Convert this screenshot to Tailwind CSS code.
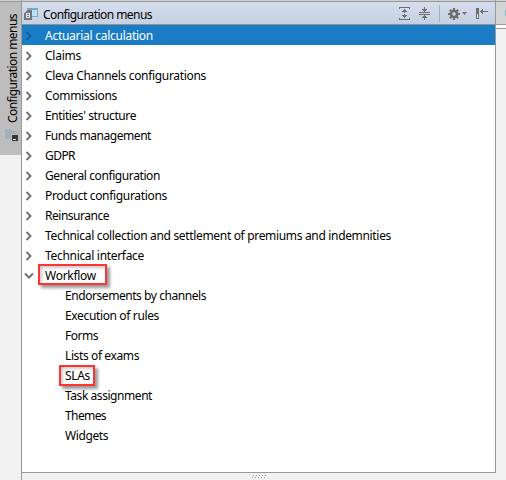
<!DOCTYPE html>
<html lang="en">
<head>
<meta charset="utf-8">
<title>Configuration menus</title>
<script src="https://cdn.jsdelivr.net/npm/@tailwindcss/browser@4"></script>
</head>
<body class="h-[480px] w-[506px] overflow-hidden bg-[#f1f1f1] font-['Noto_Sans',sans-serif] text-[12px] text-black">
<svg class="hidden"><defs>
<symbol id="c" viewBox="0 0 8 10"><path d="M1.5 1 5.5 5l-4 4" fill="none" stroke="currentColor" stroke-width="2"/></symbol>
</defs></svg>
<div class="flex h-full">
  <aside class="w-[21px] shrink-0">
    <div class="h-px bg-[#d0d0d0]"></div>
    <div class="flex h-[154px] flex-col items-center border-t border-[#999] bg-[#bdbdbd] pt-[12px]">
      <div class="flex h-[110px] w-[21px] items-center justify-center pl-[4px]"><span id="tab" class="rotate-180 whitespace-nowrap leading-[16px] [writing-mode:vertical-rl]">Configuration menus</span></div>
      <svg class="mt-[4px] ml-[3px] h-[14px] w-[14px] shrink-0" viewBox="0 0 14 14" shape-rendering="crispEdges"><path d="M0 1h5l2 2h5v8H0z" fill="#a4afb8"/><path d="M6 6h8v8H6z" fill="#bdbdbd"/><path d="M7 7h6v6H7z" fill="#383838"/><path d="M8 11h3v1H8z" fill="#e5e5e5"/></svg>
    </div>
  </aside>
  <main class="flex w-[475px] shrink-0 flex-col border-l border-[#999]">
    <section class="h-[473px] border-r border-b border-[#999] bg-white">
      <div class="h-px bg-[#d0d0d0]"></div>
      <header class="flex h-[24px] items-center border-t border-b border-t-[#999] border-b-[#8e9094] bg-linear-to-b from-[#d5deed] to-[#c7d0e1]">
        <svg class="ml-[2px] mt-[1px] h-[12px] w-[14px]" viewBox="0 0 14 12" shape-rendering="crispEdges"><path d="M3 0h11v9H8V3H3z" fill="#78aaca"/><path d="M8 2h5v6H8z" fill="#bfe0f2"/><path d="M3 2h5v10H0V5z" fill="#727579"/><path d="M2 5h4v5H2z" fill="#dfe5ee"/><path d="M3 6h2v1H3zM3 8h2v1H3z" fill="#727579"/></svg>
        <h1 id="title" class="ml-[5px] mt-[3px] whitespace-nowrap leading-[16px]">Configuration menus</h1>
        <div class="ml-auto flex items-center pt-[1px] text-[#6e6e6e]">
          <svg class="h-[13px] w-[11px]" viewBox="0 0 11 13" fill="currentColor" shape-rendering="crispEdges"><path d="M0 0h11v2h-1V1H1v1H0zM0 11h1v1h9v-1h1v2H0zM5 2h1v1h1v1h1v1H6v1H5V5H3V4h1V3h1zM5 7h1v1h2v1H7v1H6v1H5v-1H4V9H3V8h2z"/></svg>
          <svg class="ml-[9px] h-[13px] w-[11px]" viewBox="0 0 11 13" fill="currentColor" shape-rendering="crispEdges"><path d="M5 0h1v2h2v1H7v1H6v1H5V4H4V3H3V2h2zM0 5h11v1H0zM0 7h11v1H0zM5 8h1v1h1v1h1v1H6v2H5v-2H3v-1h1V9h1z"/></svg>
          <div class="ml-[9px] h-[17px] w-px bg-[#aaaeb6]"></div>
          <svg class="ml-[8px] h-[12px] w-[12px]" viewBox="0 0 12 12"><g stroke="currentColor" stroke-width="2.2"><path d="M6 0v12M0 6h12M1.8 1.8l8.4 8.4M10.2 1.8l-8.4 8.4"/></g><circle cx="6" cy="6" r="4.3" fill="currentColor"/><circle cx="6" cy="6" r="1.8" fill="#ced7e7"/></svg>
          <svg class="ml-[2px] h-[3px] w-[5px]" viewBox="0 0 5 3"><path d="M0 0h5L2.5 3z" fill="currentColor"/></svg>
          <svg class="ml-[9px] mr-[7px] h-[11px] w-[12px]" viewBox="0 0 12 11" fill="currentColor" shape-rendering="crispEdges"><path d="M0 0h3v11H0z"/><path d="M1 6h1v4H1z" fill="#eef1f6"/><path d="M4 3h1V2h1V1h1v2h5v1H7v2H6V5H5V4H4z"/></svg>
        </div>
      </header>
      <ul id="tree"></ul>
    </section>
    <div class="flex h-[7px] justify-center pt-[2px]">
      <svg class="h-[3px] w-[14px]" viewBox="0 0 14 3" fill="#999" shape-rendering="crispEdges"><path d="M1 0h1v1H1zM4 0h1v1H4zM7 0h1v1H7zM10 0h1v1h-1zM13 0h1v1h-1zM0 2h1v1H0zM3 2h1v1H3zM6 2h1v1H6zM9 2h1v1H9zM12 2h1v1h-1z"/></svg>
    </div>
  </main>
  <aside class="flex w-[10px] flex-col">
    <div class="h-px bg-[#d0d0d0]"></div>
    <div class="relative h-[24px] border-t border-b border-[#999] bg-[#d4d4d4]"><div class="absolute top-[8px] right-0 h-[6px] w-px bg-[#72c8d3]"></div></div>
    <div class="h-[4px] border-b border-[#999] bg-white"></div>
  </aside>
</div>
<script>
const rows = [
  ['Actuarial calculation', 108], ['Claims', 36], ['Cleva Channels configurations', 161], ['Commissions', 72],
  ["Entities' structure", 91], ['Funds management', 106], ['GDPR', 30], ['General configuration', 115],
  ['Product configurations', 122], ['Reinsurance', 64], ['Technical collection and settlement of premiums and indemnities', 346],
  ['Technical interface', 99], ['Workflow', 51], ['Endorsements by channels', 141], ['Execution of rules', 94],
  ['Forms', 33], ['Lists of exams', 74], ['SLAs', 25], ['Task assignment', 87], ['Themes', 41], ['Widgets', 43]
];
const pen = document.createElement('canvas').getContext('2d');
function fit(el, width) {
  pen.font = '12px "Noto Sans"';
  const text = el.textContent;
  el.style.letterSpacing = ((width - pen.measureText(text).width) / text.length) + 'px';
}
const tree = document.getElementById('tree');
rows.forEach(([name, width], i) => {
  const li = document.createElement('li');
  li.className = 'relative flex h-[20px] items-center ' + (i === 0 ? 'bg-[#1a7cc4] text-white' : '');
  const frame = i === 12 ? '<div class="absolute left-[16px] -top-[1px] h-[21px] w-[69px] border-2 border-[#ff3333] shadow-[3px_3px_3px_#0006,inset_2px_2px_3px_#0003]"></div>'
    : i === 17 ? '<div class="absolute left-[37px] top-0 h-[21px] w-[36px] border-2 border-[#ff3333] shadow-[3px_3px_3px_#0006,inset_2px_2px_3px_#0003]"></div>' : '';
  const arrow = i < 13 ? '<svg class="ml-[3px] mt-px h-[10px] w-[8px] shrink-0 ' + (i === 12 ? 'rotate-90' : '') + ' ' + (i === 0 ? 'text-[#135f99]' : 'text-[#737373]') + '"><use href="#c"/></svg>' : '';
  li.innerHTML = arrow + '<span class="mt-[2px] whitespace-nowrap leading-[20px] ' + (i < 13 ? 'ml-[12px]' : 'ml-[43px]') + '"></span>' + frame;
  const label = li.querySelector('span');
  label.textContent = name;
  tree.append(li);
  fit(label, width);
});
fit(document.getElementById('title'), 109);
fit(document.getElementById('tab'), 109);
</script>
</body>
</html>
